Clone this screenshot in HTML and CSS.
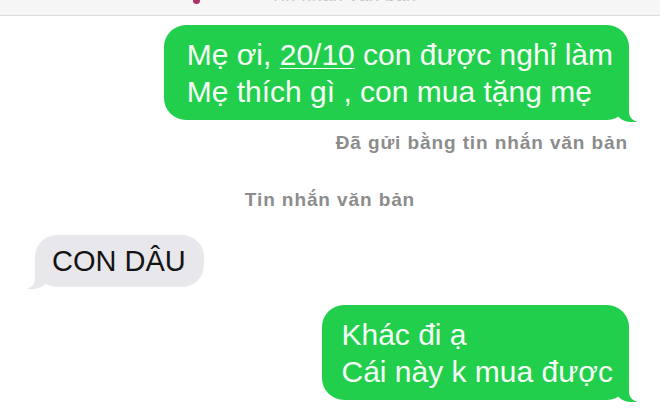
FILE: index.html
```html
<!DOCTYPE html>
<html lang="vi">
<head>
    <meta charset="UTF-8">
    <meta name="viewport" content="width=device-width, initial-scale=1.0">
    <title>Tin nhắn</title>
    <link rel="stylesheet" href="styles.css">
</head>
<body>
    <div class="topbar">
        <div class="topbar-inner">
            <span class="dot"></span>
            <span class="top-title">Tin nhắn văn bản</span>
        </div>
    </div>

    <div class="thread">
        <div class="bubble sent first">
            Mẹ ơi, <span class="link">20/10</span> con được nghỉ làm<br>
            Mẹ thích gì , con mua tặng mẹ
        </div>
        <div class="status">Đã gửi bằng tin nhắn văn bản</div>

        <div class="divider">Tin nhắn văn bản</div>

        <div class="bubble received">CON DÂU</div>

        <div class="bubble sent last">
            Khác đi ạ<br>
            Cái này k mua được
        </div>
    </div>
</body>
</html>
```

FILE: styles.css
```css
* {
    margin: 0;
    padding: 0;
    box-sizing: border-box;
}

body {
    font-family: 'Liberation Sans', Arial, sans-serif;
    background: #ffffff;
    width: 660px;
    height: 414px;
    overflow: hidden;
}

.topbar {
    height: 16px;
    background: #f6f6f6;
    border-bottom: 1px solid #dedede;
    display: flex;
    align-items: flex-end;
    overflow: hidden;
}

.topbar-inner {
    height: 24px;
    display: flex;
    align-items: center;
    gap: 70px;
    margin-left: 193px;
    margin-bottom: 8px;
}

.dot {
    width: 7px;
    height: 7px;
    margin-top: 10px;
    border-radius: 50%;
    background: #b0306a;
}

.top-title {
    font-size: 18px;
    color: #c4c4c4;
    letter-spacing: 0.5px;
}

.thread {
    display: flex;
    flex-direction: column;
}

.bubble {
    position: relative;
    font-size: 30px;
    line-height: 37px;
    border-radius: 22px;
}

.sent {
    align-self: flex-end;
    background: #22cf4c;
    color: #f6fff6;
    margin-right: 31px;
}

.sent::before {
    content: '';
    position: absolute;
    bottom: -2px;
    right: -8px;
    width: 22px;
    height: 22px;
    background: #22cf4c;
    border-bottom-left-radius: 16px 14px;
}

.sent::after {
    content: '';
    position: absolute;
    bottom: -2px;
    right: -14px;
    width: 14px;
    height: 24px;
    background: #ffffff;
    border-bottom-left-radius: 10px;
}

.first {
    margin-top: 9px;
    padding: 11px 16px 10px 23px;
}

.link {
    text-decoration: underline;
    text-decoration-thickness: 1px;
    text-underline-offset: 3px;
}

.status {
    align-self: flex-end;
    margin-top: 12px;
    margin-right: 32px;
    font-size: 19px;
    line-height: 22px;
    font-weight: bold;
    letter-spacing: 0.9px;
    color: #8c8c8c;
}

.divider {
    align-self: center;
    margin-top: 35px;
    font-size: 19px;
    line-height: 22px;
    font-weight: bold;
    letter-spacing: 0.9px;
    color: #8c8c8c;
}

.received {
    align-self: flex-start;
    margin-top: 24px;
    margin-left: 35px;
    padding: 8px 18px 8px 17px;
    background: #e7e7ec;
    color: #141414;
    font-size: 29px;
    line-height: 36px;
}

.received::before {
    content: '';
    position: absolute;
    bottom: -2px;
    left: -8px;
    width: 22px;
    height: 22px;
    background: #e7e7ec;
    border-bottom-right-radius: 16px 14px;
}

.received::after {
    content: '';
    position: absolute;
    bottom: -2px;
    left: -14px;
    width: 14px;
    height: 24px;
    background: #ffffff;
    border-bottom-right-radius: 10px;
}

.last {
    margin-top: 18px;
    padding: 11px 16px 10px 19px;
}
```
